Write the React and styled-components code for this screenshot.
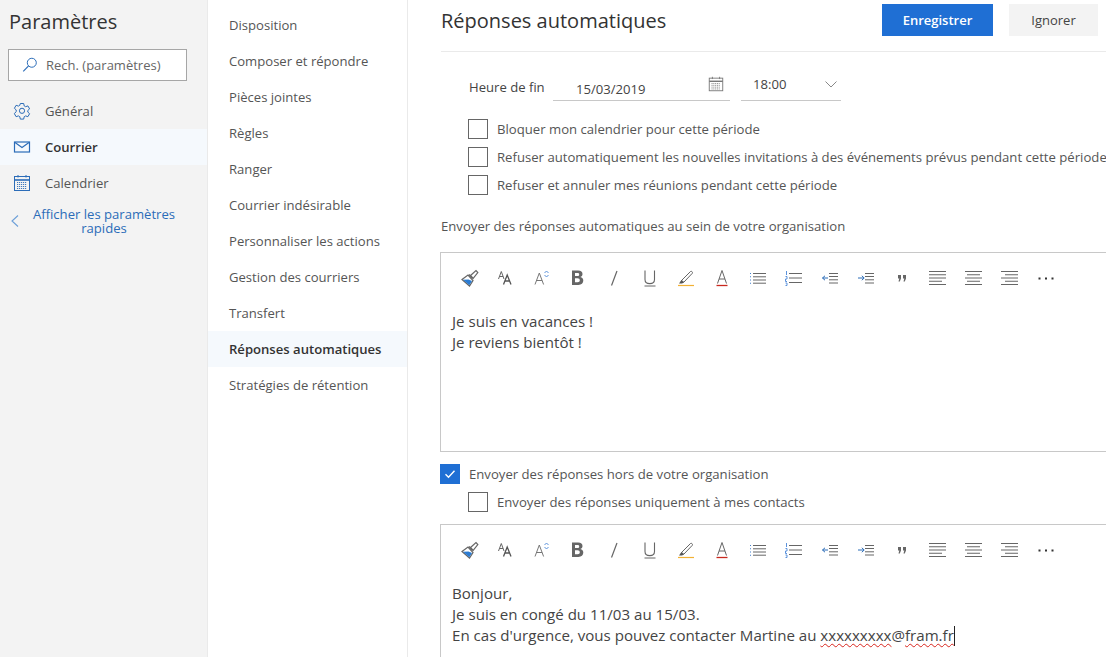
import React from 'react'
import styled, { createGlobalStyle } from 'styled-components'

const GlobalStyle = createGlobalStyle`
  html, body { margin: 0; padding: 0; height: 100%; background: #fff; }
  body { font-family: "Open Sans", "Liberation Sans", sans-serif; color: #333; }
`

const Page = styled.div`
  display: flex;
  width: 1106px;
  height: 657px;
  overflow: hidden;
`

const Sidebar = styled.aside`
  flex: 0 0 207px;
  background: #f3f3f3;
  border-right: 1px solid #eaeaea;
`

const AppTitle = styled.h1`
  margin: 0;
  padding: 8px 0 0 9px;
  height: 41px;
  font-size: 20px;
  line-height: 28px;
  font-weight: 400;
  color: #333;
`

const SearchBox = styled.div`
  display: flex;
  align-items: center;
  gap: 7px;
  margin-left: 8px;
  width: 179px;
  height: 32px;
  box-sizing: border-box;
  padding-left: 12px;
  background: #fff;
  border: 1px solid #a6a6a6;
  font-size: 13px;
  color: #666;
  white-space: nowrap;
`

const SideNav = styled.nav`
  margin-top: 12px;
`

const SideItem = styled.div`
  display: flex;
  align-items: center;
  height: 36px;
  padding-left: 12px;
  gap: 13px;
  font-size: 13.1px;
  color: ${p => (p.$active ? '#333' : '#555')};
  font-weight: ${p => (p.$active ? 600 : 400)};
  background: ${p => (p.$active ? '#f5f9fd' : 'transparent')};
`

const BackLink = styled.div`
  display: flex;
  align-items: center;
  padding: 6px 0 0 10px;
  font-size: 13.1px;
  line-height: 14px;
  color: #2b6cb8;
`

const BackText = styled.span`
  width: 160px;
  margin-left: 4px;
  text-align: center;
`

const SubNav = styled.nav`
  flex: 0 0 199px;
  padding-top: 7px;
  border-right: 1px solid #eaeaea;
`

const SubItem = styled.div`
  height: 36px;
  line-height: 37px;
  padding-left: 21px;
  font-size: 13.1px;
  white-space: nowrap;
  color: ${p => (p.$active ? '#333' : '#555')};
  font-weight: ${p => (p.$active ? 600 : 400)};
  background: ${p => (p.$active ? '#f5f9fd' : 'transparent')};
`

const Main = styled.main`
  flex: 1;
  min-width: 0;
  padding-left: 33px;
  overflow: hidden;
`

const Header = styled.header`
  display: flex;
  align-items: center;
  height: 51px;
  padding-right: 8px;
  border-bottom: 1px solid #eaeaea;
`

const Heading = styled.h2`
  flex: 1;
  margin: 0 0 9px;
  font-size: 20px;
  line-height: 28px;
  font-weight: 400;
  color: #333;
`

const Button = styled.div`
  display: flex;
  align-items: center;
  justify-content: center;
  height: 32px;
  margin: 0 0 11px ${p => (p.$primary ? 0 : '16px')};
  width: ${p => (p.$primary ? '111px' : '89px')};
  background: ${p => (p.$primary ? '#1f6fd4' : '#f3f3f3')};
  color: ${p => (p.$primary ? '#fff' : '#444')};
  font-size: 13px;
  font-weight: ${p => (p.$primary ? 600 : 400)};
`

const EndRow = styled.div`
  display: flex;
  align-items: flex-start;
  height: 59px;
  padding-top: 20px;
  padding-left: 28px;
  box-sizing: border-box;
  font-size: 13.1px;
  color: #444;
`

const EndLabel = styled.span`
  width: 84px;
  line-height: 30px;
  white-space: nowrap;
`

const Field = styled.div`
  display: flex;
  justify-content: space-between;
  width: ${p => p.$w}px;
  height: 29px;
  margin-right: 11px;
  box-sizing: border-box;
  padding: ${p => p.$pad};
  border-bottom: 1px solid #c8c8c8;
  line-height: 24px;
  color: #444;
`

const FieldText = styled.span`
  padding-top: ${p => p.$top || 0}px;
`

const FieldIcon = styled.span`
  display: flex;
  padding-top: ${p => p.$top}px;
`

const CheckRow = styled.label`
  display: flex;
  align-items: center;
  height: 28px;
  gap: 9px;
  margin-left: ${p => p.$indent}px;
  font-size: 13.15px;
  color: #555;
  white-space: nowrap;
`

const Box = styled.span`
  flex: 0 0 20px;
  display: flex;
  align-items: center;
  justify-content: center;
  width: 20px;
  height: 20px;
  box-sizing: border-box;
  border: 1px solid ${p => (p.$checked ? '#1f6fd4' : '#666')};
  background: ${p => (p.$checked ? '#1f6fd4' : '#fff')};
`

const Checks = styled.div`
  padding-top: 4px;
`

const SectionLabel = styled.div`
  height: 53px;
  padding-top: 17px;
  box-sizing: border-box;
  line-height: 20px;
  font-size: 13.15px;
  color: #555;
`

const Editor = styled.div`
  width: 760px;
  height: ${p => p.$h}px;
  margin-left: -1px;
  box-sizing: border-box;
  border: 1px solid #c8c8c8;
  padding: 7px 11px 0;
`

const Toolbar = styled.div`
  display: flex;
  height: 36px;
`

const Tool = styled.span`
  flex: 0 0 36px;
  display: flex;
  align-items: center;
  justify-content: center;
`

const Body = styled.div`
  padding-top: 15px;
  font-size: 15.1px;
  line-height: 21px;
  color: #444;
  white-space: nowrap;
`

const Misspelled = styled.span`
  text-decoration: underline wavy #d8251d 1px;
  text-underline-offset: 2px;
`

const Caret = styled.span`
  display: inline-block;
  width: 1px;
  height: 20px;
  background: #222;
  vertical-align: -5px;
`

const ExternalRows = styled.div`
  padding-top: 8px;
  height: 72px;
  box-sizing: border-box;
`

const Svg = ({ size = 20, children }) => (
  <svg width={size} height={size} viewBox="0 0 20 20" fill="none">{children}</svg>
)

const BLUE = '#2b6cb8'
const GREY = '#666'

const SearchIcon = () => (
  <Svg size={18}>
    <circle cx="12" cy="7.5" r="5" stroke={BLUE} strokeWidth="1.1" />
    <path d="M8.4 11 2.5 17" stroke={BLUE} strokeWidth="1.3" />
  </Svg>
)

const GearIcon = () => (
  <Svg>
    <path d="M8.3 2.5h3.4l.5 2.4 1.4.8 2.3-.8 1.7 3-1.8 1.6v1.6l1.8 1.6-1.7 3-2.3-.8-1.4.8-.5 2.4H8.3l-.5-2.4-1.4-.8-2.3.8-1.7-3L4.2 10.5V8.9L2.4 7.3l1.7-3 2.3.8 1.4-.8z" stroke={BLUE} strokeWidth="1" />
    <circle cx="10" cy="9.8" r="2.6" stroke={BLUE} strokeWidth="1" />
  </Svg>
)

const MailIcon = () => (
  <Svg>
    <rect x="2.5" y="5" width="15" height="10" stroke={BLUE} strokeWidth="1.2" />
    <path d="m3 5.5 7 5 7-5" stroke={BLUE} strokeWidth="1.1" />
  </Svg>
)

const CalendarIcon = ({ color = BLUE, size = 20 }) => (
  <Svg size={size}>
    <rect x="2.5" y="3.5" width="15" height="14" stroke={color} strokeWidth="1" />
    <path d="M2.5 7h15" stroke={color} strokeWidth="1.6" />
    <path d="M6 2v2.5M14 2v2.5" stroke={color} strokeWidth="1" />
    <path d="M5 9.5h10M5 11.5h10M5 13.5h10M5 15.5h10" stroke={color} strokeWidth=".9" strokeDasharray="1.2 .8" />
  </Svg>
)

const BackIcon = () => (
  <svg width="10" height="14" viewBox="0 0 10 14" fill="none">
    <path d="M8 1.5 2 7l6 5.5" stroke="#6c9fd8" strokeWidth="1.1" />
  </svg>
)

const ChevronIcon = () => (
  <svg width="12" height="7" viewBox="0 0 12 7" fill="none">
    <path d="M.5.5 6 6l5.5-5.5" stroke="#888" strokeWidth="1" />
  </svg>
)

const CheckIcon = () => (
  <svg width="12" height="10" viewBox="0 0 12 10" fill="none">
    <path d="m1.5 5.2 3 3 6-6.5" stroke="#fff" strokeWidth="1.4" />
  </svg>
)

const BrushIcon = () => (
  <Svg>
    <path d="M2 11.5 8 7l5 5.5-3.5 5.5z" stroke={GREY} strokeWidth="1.2" />
    <path d="M3 11.8 8.5 11.5l3.5 1.5-2.7 4.300z" fill="#2b7cd3" />
    <path d="m9 6.5 3.5 3.5" stroke={GREY} strokeWidth="1.4" />
    <path d="m10.5 7.5 5.5-5 1.8 2-4.800 6z" stroke={GREY} strokeWidth="1.2" />
  </Svg>
)

const FontSizeIcon = () => (
  <Svg>
    <path d="m2.5 11 2.8-7.5L8 11M3.5 8.5h3.6" stroke={GREY} strokeWidth="1" />
    <path d="m7.5 16.5 3.7-9.5 3.8 9.5M9 13h4.5" stroke="#555" strokeWidth="1.3" />
  </Svg>
)

const GrowIcon = () => (
  <Svg>
    <path d="m3 16.5 4.3-11.5 4.3 11.5M4.5 12.5h5.6" stroke="#777" strokeWidth="1" />
    <path d="m12.5 5 2-2 2 2M12.5 7l2 2 2-2" stroke="#5c93dc" strokeWidth="1" />
  </Svg>
)

const BoldIcon = () => (
  <Svg>
    <path d="M4 2.5h6.2c2.8 0 4.3 1.3 4.3 3.5 0 1.5-.8 2.6-2.2 3.1 1.9.4 3 1.700 3 3.5 0 2.6-1.9 4.400-4.900 4.400H4zm3 2.400v3.200h2.300c1.300 0 1.900-.6 1.900-1.700s-.7-1.500-2-1.500zm0 5.400v4h2.600c1.500 0 2.200-.7 2.200-2s-.8-2-2.300-2z" fill="#666" fillRule="evenodd" />
  </Svg>
)

const ItalicIcon = () => (
  <Svg>
    <path d="M13 3 7.5 17.5" stroke={GREY} strokeWidth="1.2" />
  </Svg>
)

const UnderlineIcon = () => (
  <Svg>
    <path d="M5 2.5v9c0 5.500 9.500 5.500 9.500 0v-9" stroke={GREY} strokeWidth="1.1" />
    <path d="M4.5 18h11" stroke={GREY} strokeWidth="1" />
  </Svg>
)

const HighlightIcon = () => (
  <Svg>
    <path d="m6 12 8.500-8.500c1-.8 2.600.8 1.800 1.800L8 14H5z" stroke={GREY} strokeWidth="1" />
    <path d="M3 15.5 5.500 12 8 14.500 6 15.500z" fill="#555" />
    <path d="M2 17.5h16" stroke="#f2b134" strokeWidth="1.2" />
  </Svg>
)

const FontColorIcon = () => (
  <Svg>
    <path d="m5.500 15.500 4.500-13 4.500 13M7 11h6" stroke={GREY} strokeWidth="1" />
    <path d="M4.500 17.500h11" stroke="#c8281e" strokeWidth="1.3" />
  </Svg>
)

const BulletsIcon = () => (
  <Svg>
    <path d="M5 5.500h13M5 8.800h13M5 12h13M5 15.200h13" stroke={GREY} strokeWidth="1" />
    <path d="M2 5h1v1H2zM2 8.300h1v1H2zM2 11.500h1v1H2zM2 14.700h1v1H2z" fill="#3f7fd0" />
  </Svg>
)

const NumberedIcon = () => (
  <Svg>
    <path d="M5 5.500h13M5 10h13M5 14.500h13" stroke={GREY} strokeWidth="1" />
    <path d="M2.500 3v4M1.500 8.500H3V11H1.500v2.500H3M1.500 15H3v2.500H1.500" stroke="#5c93dc" strokeWidth="1" />
  </Svg>
)

const OutdentIcon = () => (
  <Svg>
    <path d="M9 5.500h9M9 8.500h9M9 11.800h9M9 15h9" stroke={GREY} strokeWidth="1" />
    <path d="M8 10H2.500M5 7.800 2.500 10 5 12.200" stroke={BLUE} strokeWidth="1" />
  </Svg>
)

const IndentIcon = () => (
  <Svg>
    <path d="M9 5.500h9M9 8.500h9M9 11.800h9M9 15h9" stroke={GREY} strokeWidth="1" />
    <path d="M2 10h6M5.800 7.800 8.200 10l-2.400 2.200" stroke={BLUE} strokeWidth="1" />
  </Svg>
)

const QuoteIcon = () => (
  <Svg>
    <path d="M6 7h3v3.500L7.800 13.500H6.500l.8-3H6zM11 7h3v3.500l-1.200 3h-1.300l.8-3H11z" fill="#666" />
  </Svg>
)

const AlignIcon = ({ lines }) => (
  <Svg>
    {lines.map(([x1, x2], i) => (
      <path key={i} d={`M${x1} ${3.5 + i * 3.25}H${x2}`} stroke={GREY} strokeWidth="1" />
    ))}
  </Svg>
)

const MoreIcon = () => (
  <Svg>
    <path d="M2.500 9.500h2v2h-2zM9 9.500h2v2H9zM15.500 9.500h2v2h-2z" fill="#333" />
  </Svg>
)

const tools = [
  <BrushIcon />, <FontSizeIcon />, <GrowIcon />, <BoldIcon />, <ItalicIcon />, <UnderlineIcon />,
  <HighlightIcon />, <FontColorIcon />, <BulletsIcon />, <NumberedIcon />, <OutdentIcon />, <IndentIcon />,
  <QuoteIcon />,
  <AlignIcon lines={[[1, 18], [1, 18], [1, 18], [1, 14], [1, 18]]} />,
  <AlignIcon lines={[[1, 18], [3, 16], [1, 18], [3, 16], [1, 18]]} />,
  <AlignIcon lines={[[1, 18], [5, 18], [1, 18], [5, 18], [1, 18]]} />,
  <MoreIcon />,
]

const EditorTools = () => (
  <Toolbar>
    {tools.map((t, i) => <Tool key={i}>{t}</Tool>)}
  </Toolbar>
)

const subItems = [
  'Disposition', 'Composer et répondre', 'Pièces jointes', 'Règles', 'Ranger', 'Courrier indésirable',
  'Personnaliser les actions', 'Gestion des courriers', 'Transfert', 'Réponses automatiques', 'Stratégies de rétention',
]

const App = () => {
  return (
    <Page>
      <GlobalStyle />
      <Sidebar>
        <AppTitle>Paramètres</AppTitle>
        <SearchBox><SearchIcon />Rech. (paramètres)</SearchBox>
        <SideNav>
          <SideItem><GearIcon />Général</SideItem>
          <SideItem $active><MailIcon />Courrier</SideItem>
          <SideItem><CalendarIcon />Calendrier</SideItem>
        </SideNav>
        <BackLink><BackIcon /><BackText>Afficher les paramètres rapides</BackText></BackLink>
      </Sidebar>

      <SubNav>
        {subItems.map(s => (
          <SubItem key={s} $active={s === 'Réponses automatiques'}>{s}</SubItem>
        ))}
      </SubNav>

      <Main>
        <Header>
          <Heading>Réponses automatiques</Heading>
          <Button $primary>Enregistrer</Button>
          <Button>Ignorer</Button>
        </Header>

        <EndRow>
          <EndLabel>Heure de fin</EndLabel>
          <Field $w={177} $pad="0 5px 0 23px">
            <FieldText $top={5}>15/03/2019</FieldText>
            <FieldIcon $top={3}><CalendarIcon color="#777" size={18} /></FieldIcon>
          </Field>
          <Field $w={100} $pad="0 4px 0 12px">
            <FieldText>18:00</FieldText>
            <FieldIcon $top={9}><ChevronIcon /></FieldIcon>
          </Field>
        </EndRow>

        <Checks>
          <CheckRow $indent={27}><Box />Bloquer mon calendrier pour cette période</CheckRow>
          <CheckRow $indent={27}><Box />Refuser automatiquement les nouvelles invitations à des événements prévus pendant cette période</CheckRow>
          <CheckRow $indent={27}><Box />Refuser et annuler mes réunions pendant cette période</CheckRow>
        </Checks>

        <SectionLabel>Envoyer des réponses automatiques au sein de votre organisation</SectionLabel>

        <Editor $h={200}>
          <EditorTools />
          <Body>Je suis en vacances !<br />Je reviens bientôt !</Body>
        </Editor>

        <ExternalRows>
          <CheckRow $indent={-1}><Box $checked><CheckIcon /></Box>Envoyer des réponses hors de votre organisation</CheckRow>
          <CheckRow $indent={27}><Box />Envoyer des réponses uniquement à mes contacts</CheckRow>
        </ExternalRows>

        <Editor $h={200}>
          <EditorTools />
          <Body>
            Bonjour,<br />
            Je suis en congé du 11/03 au 15/03.<br />
            En cas d'urgence, vous pouvez contacter Martine au <Misspelled>xxxxxxxxx</Misspelled>@<Misspelled>fram.fr</Misspelled><Caret />
          </Body>
        </Editor>
      </Main>
    </Page>
  )
}

export default App
